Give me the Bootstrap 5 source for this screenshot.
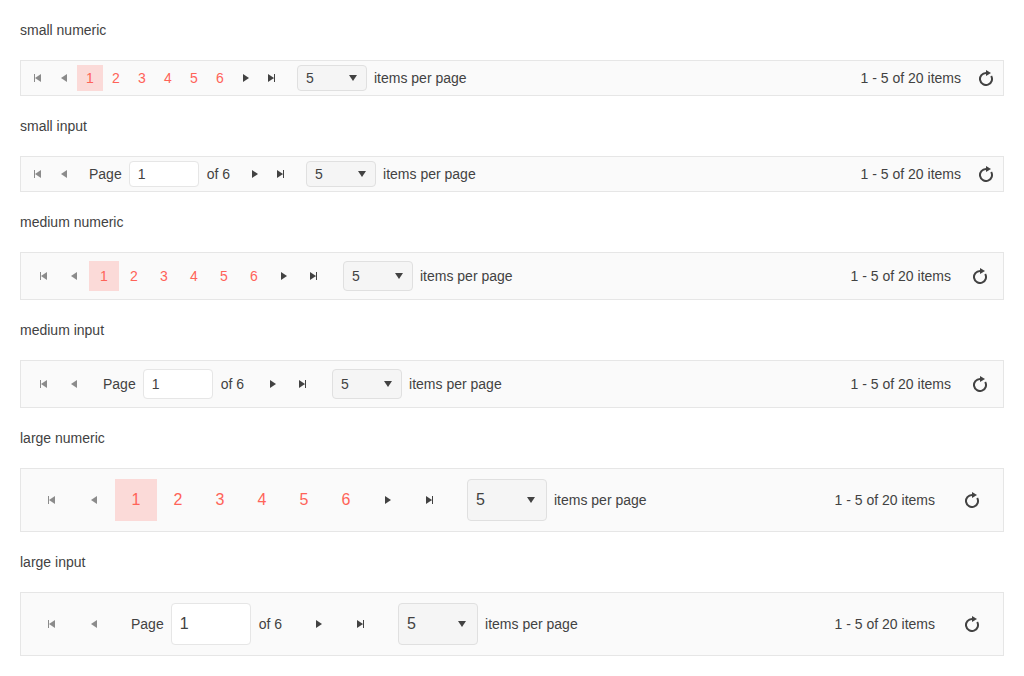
<!DOCTYPE html>
<html lang="en">
<head>
<meta charset="utf-8">
<meta name="viewport" content="width=device-width, initial-scale=1">
<title>Pager sizes</title>
<link href="https://cdn.jsdelivr.net/npm/bootstrap@5.3.0/dist/css/bootstrap.min.css" rel="stylesheet">
<style>
  body {
    font: 14px/20px "Liberation Sans", Arial, sans-serif;
    color: #424242;
    background: #fff;
  }
  .demo { padding: 20px; gap: 20px; }
  .demo-title { font-size: 14px; line-height: 20px; font-weight: 400; color: #424242; }

  .pager {
    --pad: 8px; --cell: 30px; --space: 14px; --field: 70px; --caret: 9px; --text: 14px;
    padding: var(--pad);
    background: #fafafa;
    border: 1px solid #e6e6e6;
  }
  .pager-sm { --pad: 4px; --cell: 26px; --space: 12px; }
  .pager-lg { --pad: 10px; --cell: 42px; --space: 16px; --field: 80px; --caret: 11px; --text: 16px; }

  .pager-btn {
    --bs-btn-padding-x: 0px;
    --bs-btn-padding-y: 0px;
    --bs-btn-border-width: 0px;
    --bs-btn-border-radius: 0px;
    --bs-btn-font-size: var(--text);
    --bs-btn-line-height: 20px;
    --bs-btn-color: #424242;
    --bs-btn-hover-color: #424242;
    --bs-btn-hover-bg: #ededed;
    --bs-btn-disabled-color: #424242;
    --bs-btn-disabled-opacity: .6;
    width: var(--cell);
    height: var(--cell);
  }
  .pager-num { --bs-btn-color: #ff6358; --bs-btn-hover-color: #ff6358; --bs-btn-active-color: #ff6358; --bs-btn-active-bg: #fbdad8; }
  .pager-btn svg { width: 16px; height: 16px; fill: currentColor; }

  .pager-page { margin: 0 var(--space); }
  .pager-page .form-control { margin: 0 8px 0 7px; }
  .pager-sizes { margin-left: var(--space); gap: 7px; }
  .pager-info { margin-right: var(--space); }

  .pager .form-control, .pager .form-select {
    width: var(--field);
    height: var(--cell);
    padding: 0 8px;
    font-size: var(--text);
    line-height: 20px;
    color: #424242;
    border: 1px solid #e6e6e6;
    border-radius: 4px;
  }
  .pager .form-select {
    background-color: #f5f5f5;
    border-color: #e0e0e0;
    background-image: url("data:image/svg+xml,%3Csvg xmlns='http://www.w3.org/2000/svg' viewBox='0 0 8 6'%3E%3Cpath fill='%23424242' d='M0 0h8L4 6z'/%3E%3C/svg%3E");
    background-size: 8px 6px;
    background-position: right var(--caret) center;
  }
</style>
</head>
<body>
<svg class="d-none" aria-hidden="true">
  <symbol id="i-first" viewBox="0 0 16 16"><path d="M4 4h1v8H4zM11 4v8L5 8z"/></symbol>
  <symbol id="i-prev" viewBox="0 0 16 16"><path d="M11 4v8L5 8z"/></symbol>
  <symbol id="i-next" viewBox="0 0 16 16"><path d="M5 4v8l6-4z"/></symbol>
  <symbol id="i-last" viewBox="0 0 16 16"><path d="M10 4h1v8h-1zM4 4v8l6-4z"/></symbol>
  <symbol id="i-refresh" viewBox="0 0 16 16"><path d="M8 3A6 6 0 1 0 13.2 6" fill="none" stroke="currentColor" stroke-width="2"/><path d="M8 0v6l5-3z"/></symbol>
</svg>

<main class="demo d-flex flex-column">
  <h2 class="demo-title m-0">small numeric</h2>
  <nav class="pager pager-sm d-flex align-items-center" data-mode="numeric" aria-label="small numeric"></nav>
  <h2 class="demo-title m-0">small input</h2>
  <nav class="pager pager-sm d-flex align-items-center" data-mode="input" aria-label="small input"></nav>
  <h2 class="demo-title m-0">medium numeric</h2>
  <nav class="pager d-flex align-items-center" data-mode="numeric" aria-label="medium numeric"></nav>
  <h2 class="demo-title m-0">medium input</h2>
  <nav class="pager d-flex align-items-center" data-mode="input" aria-label="medium input"></nav>
  <h2 class="demo-title m-0">large numeric</h2>
  <nav class="pager pager-lg d-flex align-items-center" data-mode="numeric" aria-label="large numeric"></nav>
  <h2 class="demo-title m-0">large input</h2>
  <nav class="pager pager-lg d-flex align-items-center" data-mode="input" aria-label="large input"></nav>
</main>

<script src="https://cdn.jsdelivr.net/npm/bootstrap@5.3.0/dist/js/bootstrap.bundle.min.js"></script>
<script>
  const button = (icon, label, disabled = '') =>
    `<button type="button" class="btn pager-btn d-flex align-items-center justify-content-center" aria-label="${label}" ${disabled}><svg aria-hidden="true"><use href="#i-${icon}"/></svg></button>`;

  const numbers = () => [1, 2, 3, 4, 5, 6].map(n =>
    `<button type="button" class="btn pager-btn pager-num ${n === 1 ? 'active' : ''}">${n}</button>`).join('');

  const pageInput = id =>
    `<div class="pager-page d-flex align-items-center"><label for="page-${id}">Page</label>
     <input class="form-control" type="text" id="page-${id}" value="1"><span>of 6</span></div>`;

  document.querySelectorAll('.pager').forEach((pager, id) => {
    pager.innerHTML =
      button('first', 'First page', 'disabled') + button('prev', 'Previous page', 'disabled') +
      (pager.dataset.mode === 'numeric' ? numbers() : pageInput(id)) +
      button('next', 'Next page') + button('last', 'Last page') +
      `<div class="pager-sizes d-flex align-items-center">
         <select class="form-select" id="size-${id}"><option>5</option><option>10</option><option>20</option></select>
         <label for="size-${id}">items per page</label>
       </div>
       <span class="pager-info ms-auto">1 - 5 of 20 items</span>` +
      button('refresh', 'Refresh');
  });
</script>
</body>
</html>
